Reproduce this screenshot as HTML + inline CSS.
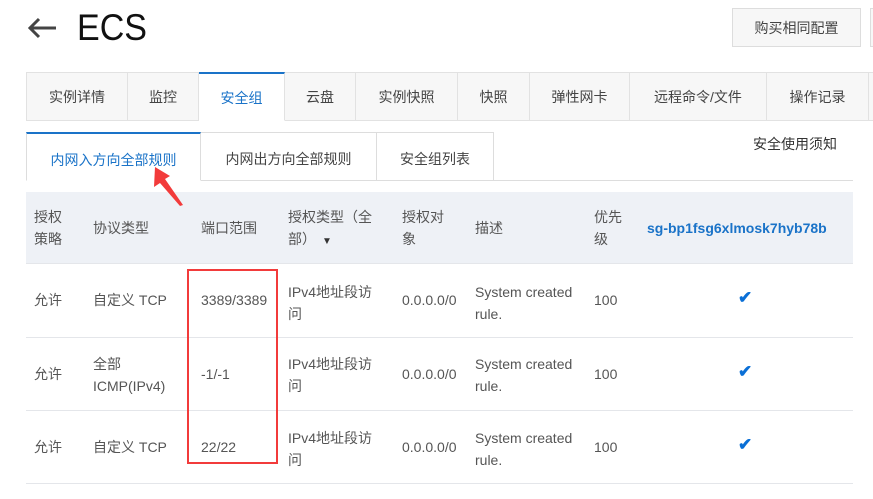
<!DOCTYPE html>
<html><head><meta charset="utf-8"><style>
*{margin:0;padding:0;box-sizing:border-box}
body{width:873px;height:499px;background:#fff;font-family:"Liberation Sans","Noto Sans CJK SC",sans-serif;color:#444;position:relative;overflow:hidden;font-size:14px}
.a{position:absolute;white-space:nowrap}
.tab{position:absolute;top:72px;height:49px;border:1px solid #e2e2e2;border-left:none;background:#f7f7f7;text-align:center;line-height:48px;font-size:14px;color:#444}
.sub{position:absolute;top:132px;height:49px;border:1px solid #ddd;border-left:none;text-align:center;line-height:52px;font-size:14px;color:#444;background:#fff}
.c{position:absolute;font-size:14px;color:#555;line-height:22px}
.sep{position:absolute;left:26px;width:827px;height:1px;background:#e4e6ea}
.chk{position:absolute;color:#0a6fd6;font-size:17px;font-weight:bold}
</style></head><body>
<svg class="a" style="left:26px;top:16px" width="32" height="24" viewBox="0 0 32 24"><path d="M30 12H4M13 3L4 12l9 9" stroke="#444" stroke-width="3" fill="none"/></svg>
<div class="a" style="left:77px;top:7px;font-size:37px;color:#111;line-height:42px;transform:scaleX(0.92);transform-origin:left">ECS</div>
<div class="a" style="left:732px;top:8px;width:129px;height:39px;border:1px solid #ddd;background:#f7f7f7;text-align:center;line-height:38px;font-size:14px">购买相同配置</div>
<div class="a" style="left:870px;top:8px;width:10px;height:39px;border:1px solid #ddd;background:#f7f7f7"></div>

<div class="tab" style="left:26px;width:102px;border-left:1px solid #e2e2e2">实例详情</div>
<div class="tab" style="left:128px;width:71px">监控</div>
<div class="tab" style="left:199px;width:86px;background:#fff;border-top:2px solid #1a73c8;border-bottom-color:#fff;color:#1a73c8">安全组</div>
<div class="tab" style="left:285px;width:71px">云盘</div>
<div class="tab" style="left:356px;width:102px">实例快照</div>
<div class="tab" style="left:458px;width:72px">快照</div>
<div class="tab" style="left:530px;width:100px">弹性网卡</div>
<div class="tab" style="left:630px;width:137px">远程命令/文件</div>
<div class="tab" style="left:767px;width:102px">操作记录</div>
<div class="tab" style="left:869px;width:10px"></div>

<div class="sub" style="left:26px;width:175px;border-left:1px solid #ddd;border-top:2px solid #1a73c8;border-bottom-color:#fff;color:#1a73c8">内网入方向全部规则</div>
<div class="sub" style="left:201px;width:176px">内网出方向全部规则</div>
<div class="sub" style="left:377px;width:117px">安全组列表</div>
<div class="a" style="left:494px;top:180px;width:359px;height:1px;background:#ddd"></div>
<div class="a" style="left:753px;top:134px;font-size:14px;color:#333">安全使用须知</div>

<div class="a" style="left:26px;top:192px;width:827px;height:71px;background:#eef1f6"></div>
<div class="c" style="left:34px;top:206px">授权<br>策略</div>
<div class="c" style="left:93px;top:217px">协议类型</div>
<div class="c" style="left:201px;top:217px">端口范围</div>
<div class="c" style="left:288px;top:206px">授权类型（全<br>部）<span style="font-size:10px;margin-left:6px;color:#333">▼</span></div>
<div class="c" style="left:402px;top:206px">授权对<br>象</div>
<div class="c" style="left:475px;top:217px">描述</div>
<div class="c" style="left:594px;top:206px">优先<br>级</div>
<div class="c" style="left:647px;top:217px;color:#1a73c8;font-weight:bold">sg-bp1fsg6xlmosk7hyb78b</div>

<div class="sep" style="top:263px"></div>
<div class="sep" style="top:337px"></div>
<div class="sep" style="top:410px"></div>
<div class="sep" style="top:483px"></div>

<div class="c" style="left:34px;top:289px">允许</div>
<div class="c" style="left:93px;top:289px">自定义 TCP</div>
<div class="c" style="left:201px;top:289px">3389/3389</div>
<div class="c" style="left:288px;top:281px">IPv4地址段访<br>问</div>
<div class="c" style="left:402px;top:289px">0.0.0.0/0</div>
<div class="c" style="left:475px;top:281px">System created<br>rule.</div>
<div class="c" style="left:594px;top:289px">100</div>
<div class="chk" style="left:738px;top:288px">✔</div>

<div class="c" style="left:34px;top:363px">允许</div>
<div class="c" style="left:93px;top:353px">全部<br>ICMP(IPv4)</div>
<div class="c" style="left:201px;top:363px">-1/-1</div>
<div class="c" style="left:288px;top:353px">IPv4地址段访<br>问</div>
<div class="c" style="left:402px;top:363px">0.0.0.0/0</div>
<div class="c" style="left:475px;top:353px">System created<br>rule.</div>
<div class="c" style="left:594px;top:363px">100</div>
<div class="chk" style="left:738px;top:362px">✔</div>

<div class="c" style="left:34px;top:436px">允许</div>
<div class="c" style="left:93px;top:436px">自定义 TCP</div>
<div class="c" style="left:201px;top:436px">22/22</div>
<div class="c" style="left:288px;top:427px">IPv4地址段访<br>问</div>
<div class="c" style="left:402px;top:436px">0.0.0.0/0</div>
<div class="c" style="left:475px;top:427px">System created<br>rule.</div>
<div class="c" style="left:594px;top:436px">100</div>
<div class="chk" style="left:738px;top:435px">✔</div>

<div class="a" style="left:187px;top:269px;width:91px;height:195px;border:2px solid #f23b3b"></div>
<svg class="a" style="left:140px;top:155px" width="60" height="60"><path d="M15 12L14 32L20 28L40 51L43 50L25 24L30 21Z" fill="#f23b3b"/></svg>
</body></html>
